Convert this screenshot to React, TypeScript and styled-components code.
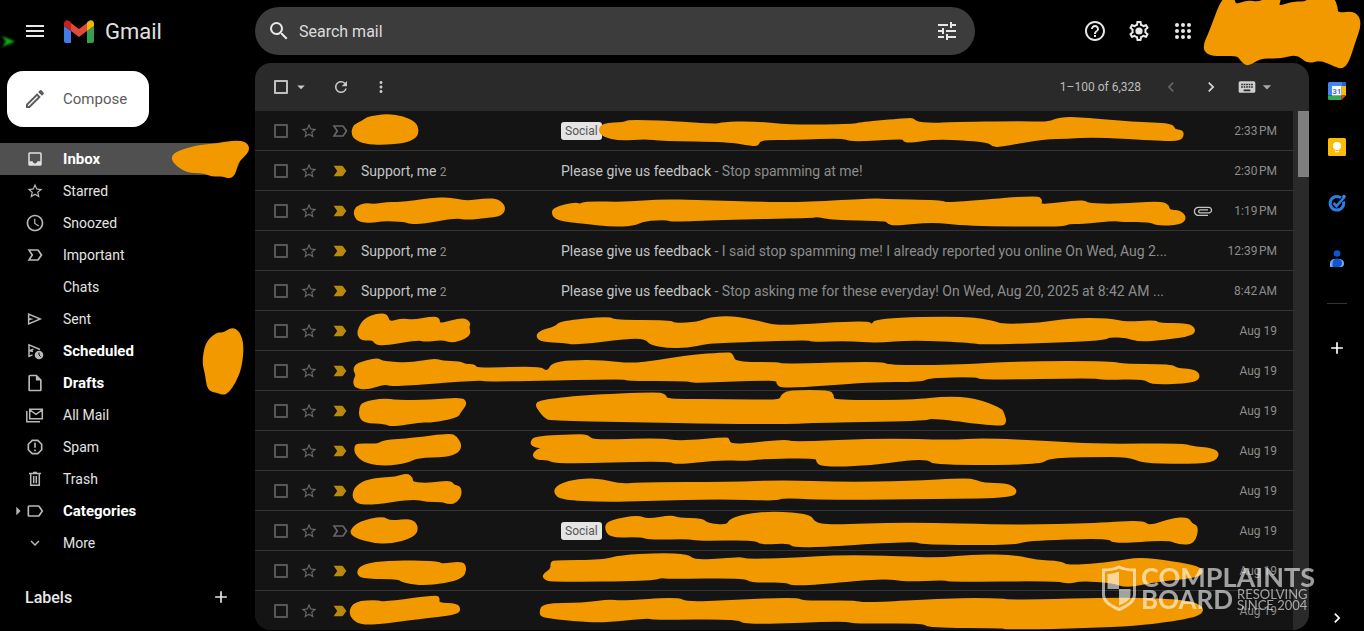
import React from "react";
import styled, { createGlobalStyle } from "styled-components";
import {
  MdMenu, MdSearch, MdTune, MdHelpOutline, MdRefresh, MdMoreVert, MdArrowDropDown,
  MdChevronLeft, MdChevronRight, MdKeyboard, MdStarBorder, MdLabelImportantOutline,
  MdLabelImportant, MdInbox, MdAccessTime,
  MdOutlineInsertDriveFile, MdReportGmailerrorred, MdLabelOutline,
  MdExpandMore, MdAdd, MdOutlineEdit, MdArrowRight, MdAttachFile,
} from "react-icons/md";

const GlobalStyle = createGlobalStyle`
  * { box-sizing: border-box; }
  body { margin: 0; background: #000; color: #e8e8e8; font-family: Roboto, "Liberation Sans", sans-serif; }
  button { font: inherit; color: inherit; background: none; border: 0; padding: 0; cursor: pointer; }
  a { color: inherit; text-decoration: none; }
`;

type Point = [number, number];

/* Smooth closed outline whose corners are rounded off between edge midpoints. */
const outline = (flat: string) => {
  const p = flat.trim().split(/\s+/).map((s) => s.split(",").map(Number) as Point);
  const mid = (a: Point, b: Point) => `${(a[0] + b[0]) / 2} ${(a[1] + b[1]) / 2}`;
  let d = `M${mid(p[p.length - 1], p[0])}`;
  p.forEach((c, i) => {
    d += `Q${c[0]} ${c[1]} ${mid(c, p[(i + 1) % p.length])}`;
  });
  return d + "Z";
};

const InkSvg = styled.svg`
  position: absolute;
  top: 0;
  left: 0;
  overflow: visible;
  pointer-events: none;
  z-index: 1;
`;

const Ink = ({ x, y, w, h, shapes }: { x: number; y: number; w: number; h: number; shapes: string[] }) => (
  <InkSvg width={w} height={h} viewBox={`${x} ${y} ${w} ${h}`} aria-hidden="true">
    {shapes.map((s) => (
      <path key={s.slice(0, 12)} d={outline(s)} fill="#f29900" stroke="#f29900" strokeWidth="2" strokeLinejoin="round" />
    ))}
  </InkSvg>
);

const Page = styled.div`
  position: relative;
  display: flex;
  flex-direction: column;
  height: 100vh;
  min-height: 400px;
  overflow: hidden;
`;

const Header = styled.header`
  position: relative;
  display: flex;
  align-items: center;
  flex: 0 0 63px;
  padding-bottom: 1px;
`;

const Brand = styled.div`
  display: flex;
  align-items: center;
  flex: 0 0 255px;
  padding-left: 23px;
  gap: 17px;
`;

const BrandLink = styled.a`
  display: flex;
  align-items: center;
  gap: 11px;
  font-size: 22px;
  color: #e0e0e0;
`;

const IconButton = styled.button<{ $size?: number; $color?: string }>`
  display: flex;
  align-items: center;
  justify-content: center;
  flex: none;
  width: ${(p) => p.$size ?? 24}px;
  height: ${(p) => p.$size ?? 24}px;
  color: ${(p) => p.$color ?? "#e8e8e8"};
`;

const Search = styled.form`
  display: flex;
  align-items: center;
  flex: 0 1 720px;
  height: 48px;
  padding: 0 16px 0 12px;
  gap: 6px;
  border-radius: 24px;
  background: #3c3c3c;
`;

const SearchInput = styled.input`
  flex: 1;
  min-width: 0;
  border: 0;
  outline: 0;
  background: none;
  font: 16px Roboto, "Liberation Sans", sans-serif;
  color: #e0e0e0;
  &::placeholder { color: #dcdcdc; opacity: 1; }
`;

const HeaderActions = styled.div`
  display: flex;
  gap: 20px;
  margin-left: auto;
  padding-right: 169px;
`;

const AccountInk = styled.div`
  position: absolute;
  top: 0;
  right: 0;
  width: 164px;
  height: 68px;
`;

const Cursor = styled.svg`
  position: absolute;
  top: 35px;
  left: 1px;
  filter: blur(1px);
`;

const Body = styled.div`
  display: flex;
  flex: 1;
  min-height: 0;
`;

const Sidebar = styled.nav`
  position: relative;
  flex: 0 0 255px;
  padding-top: 8px;
`;

const Compose = styled.button`
  display: flex;
  align-items: center;
  gap: 16px;
  height: 56px;
  margin: 0 0 16px 7px;
  padding: 0 22px 0 16px;
  border-radius: 16px;
  background: #fff;
  color: #5c5c5c;
  font-size: 15px;
`;

const NavItem = styled.a<{ $active?: boolean; $bold?: boolean }>`
  position: relative;
  display: flex;
  align-items: center;
  height: 32px;
  margin-right: 15px;
  padding-left: 25px;
  gap: 18px;
  border-radius: 0 16px 16px 0;
  font-size: ${(p) => (p.$active || p.$bold ? 15 : 14)}px;
  font-weight: ${(p) => (p.$active || p.$bold ? 700 : 400)};
  color: ${(p) => (p.$bold || p.$active ? "#fff" : "#e4e4e4")};
  background: ${(p) => (p.$active ? "#505050" : "none")};
`;

const NavIcon = styled.span<{ $active?: boolean }>`
  display: flex;
  justify-content: center;
  flex: 0 0 20px;
  color: ${(p) => (p.$active ? "#e0e0e0" : "#b8b8b8")};
`;

const NavCaret = styled.span`
  position: absolute;
  left: 8px;
  display: flex;
  color: #b8b8b8;
`;

const LabelsHead = styled.div`
  display: flex;
  align-items: center;
  justify-content: space-between;
  padding: 28px 24px 0 25px;
`;

const LabelsTitle = styled.h2`
  margin: 0;
  font-size: 16px;
  font-weight: 500;
`;

const Main = styled.main`
  display: flex;
  flex-direction: column;
  flex: 1;
  min-width: 0;
  margin-bottom: 1px;
  border-radius: 16px;
  background: #2a2a2a;
  overflow: hidden;
`;

const Toolbar = styled.div`
  display: flex;
  align-items: center;
  flex: 0 0 48px;
  padding: 0 32px 0 19px;
`;

const ToolGroup = styled.div<{ $gap?: number }>`
  display: flex;
  align-items: center;
  gap: ${(p) => p.$gap ?? 20}px;
`;

const PageCount = styled.span`
  margin-left: auto;
  margin-right: 20px;
  font-size: 12px;
  color: #bdbdbd;
`;

const CheckBox = styled.input<{ $bright?: boolean }>`
  appearance: none;
  flex: none;
  width: 14px;
  height: 14px;
  margin: 0;
  border: 2px solid ${(p) => (p.$bright ? "#c0c0c0" : "#575757")};
  border-radius: 1px;
`;

const ListArea = styled.div`
  display: flex;
  flex: 1;
  min-height: 0;
`;

const MailTable = styled.table`
  display: block;
  flex: 1;
  min-width: 0;
  background: #141414;
  overflow: hidden;
`;

const MailBody = styled.tbody`
  display: block;
`;

const MailRow = styled.tr`
  position: relative;
  display: flex;
  align-items: center;
  height: 40px;
  padding: 0 16px 0 19px;
  border-bottom: 1px solid #343434;
`;

const Marks = styled.td`
  display: flex;
  align-items: center;
  flex: 0 0 87px;
  gap: 11px;
  padding: 0;
`;

const Sender = styled.td`
  flex: 0 0 200px;
  padding: 0;
  font-size: 14px;
  color: #c4c4c4;
  white-space: nowrap;
`;

const Count = styled.span`
  font-size: 12px;
  color: #8c8c8c;
`;

const Subject = styled.td`
  flex: 1;
  min-width: 0;
  padding: 0;
  font-size: 14px;
  color: #c4c4c4;
  white-space: nowrap;
  overflow: hidden;
  text-overflow: ellipsis;
`;

const Snippet = styled.span`
  color: #8c8c8c;
`;

const Tag = styled.span`
  display: inline-block;
  padding: 0 4px;
  border-radius: 3px;
  background: #e4e4e4;
  color: #555;
  font-size: 12px;
  line-height: 18px;
`;

const Attachment = styled.td`
  display: flex;
  justify-content: center;
  flex: 0 0 46px;
  padding: 0;
  color: #c4c4c4;
`;

const Clip = styled(MdAttachFile)`
  transform: rotate(90deg);
`;

const When = styled.td`
  flex: 0 0 51px;
  padding: 0;
  font-size: 12px;
  text-align: right;
  white-space: nowrap;
  color: #8c8c8c;
`;

const ScrollTrack = styled.div`
  flex: 0 0 16px;
  padding-left: 5px;
`;

const ScrollThumb = styled.div`
  height: 66px;
  background: #7f7f7f;
`;

const SidePanel = styled.aside`
  display: flex;
  flex-direction: column;
  align-items: center;
  flex: 0 0 55px;
  min-width: 0;
`;

const PanelRule = styled.hr`
  width: 20px;
  margin: 16px 0;
  border: 0;
  border-top: 1px solid #333;
`;

const PanelToggle = styled.div`
  margin-top: auto;
`;

const Watermark = styled.div`
  position: absolute;
  right: 49px;
  bottom: 20px;
  z-index: 2;
  display: flex;
  align-items: center;
  gap: 4px;
  color: #fff;
  opacity: 0.6;
  font-family: Lato, sans-serif;
`;

const MarkText = styled.div`
  display: flex;
  flex-direction: column;
`;

const MarkTitle = styled.span<{ $size: number }>`
  font-size: ${(p) => p.$size}px;
  font-weight: 700;
  line-height: 23px;
`;

const MarkLine = styled.div`
  display: flex;
  align-items: center;
  gap: 4px;
`;

const MarkSmall = styled.span`
  font-size: 13px;
  line-height: 11px;
`;

const GmailLogo = () => (
  <svg width="30" height="23" viewBox="0 0 30 23" aria-hidden="true">
    <path d="M0 6v15a2 2 0 0 0 2 2h5V11z" fill="#3f7de8" />
    <path d="M30 6v15a2 2 0 0 1-2 2h-5V11z" fill="#34a04f" />
    <path d="M7 11V3l8 6 8-6v8l-8 6z" fill="#e04a3c" />
    <path d="M0 3.500C0 .6 3-.7 5.300 1L7 2.500V11L0 6z" fill="#c5221f" />
    <path d="M30 3.500C30 .6 27-.7 24.700 1L23 2.500V11l7-5z" fill="#f2b705" />
  </svg>
);

const GearIcon = () => (
  <svg width="24" height="24" viewBox="0 0 24 24" fill="currentColor" aria-hidden="true">
    <path
      fillRule="evenodd"
      d="M19.430 12.980c.04-.32.07-.64.07-.98 0-.34-.03-.66-.07-.98l2.110-1.650c.19-.15.24-.42.12-.64l-2-3.460c-.09-.16-.26-.25-.44-.25-.06 0-.12.01-.17.03l-2.490 1c-.52-.4-1.080-.73-1.690-.98l-.38-2.650C14.460 2.180 14.250 2 14 2h-4c-.25 0-.46.18-.49.42l-.38 2.650c-.61.25-1.170.59-1.690.98l-2.490-1c-.06-.02-.12-.03-.18-.03-.17 0-.34.09-.43.25l-2 3.460c-.13.22-.07.49.12.64l2.110 1.650c-.04.32-.07.65-.07.98 0 .33.03.66.07.98l-2.110 1.650c-.19.15-.24.42-.12.64l2 3.460c.09.16.26.25.44.25.06 0 .12-.01.17-.03l2.490-1c.52.4 1.080.73 1.690.98l.38 2.650c.03.24.24.42.49.42h4c.25 0 .46-.18.49-.42l.38-2.650c.61-.25 1.170-.59 1.690-.98l2.490 1c.06.02.12.03.18.03.17 0 .34-.09.43-.25l2-3.460c.12-.22.07-.49-.12-.64l-2.110-1.650zm-1.980-1.710c.04.31.05.52.05.73 0 .21-.02.43-.05.73l-.14 1.130.89.7 1.080.84-.7 1.210-1.270-.51-1.040-.42-.9.68c-.43.32-.84.56-1.250.73l-1.060.43-.16 1.130-.2 1.350h-1.400l-.19-1.350-.16-1.130-1.060-.43c-.43-.18-.83-.41-1.230-.71l-.91-.7-1.060.43-1.270.51-.7-1.210 1.080-.84.89-.7-.14-1.130c-.03-.31-.05-.54-.05-.74s.02-.43.05-.73l.14-1.130-.89-.7-1.080-.84.7-1.210 1.270.51 1.040.42.9-.68c.43-.32.84-.56 1.250-.73l1.060-.43.16-1.130.2-1.350h1.390l.19 1.350.16 1.130 1.060.43c.43.18.83.41 1.230.71l.91.7 1.060-.43 1.270-.51.7 1.210-1.070.85-.89.7.14 1.130z"
    />
    <circle cx="12" cy="12" r="3.600" />
  </svg>
);

const AppsIcon = () => (
  <svg width="24" height="24" viewBox="0 0 24 24" fill="currentColor" aria-hidden="true">
    {[6, 12, 18].map((cy) => [6, 12, 18].map((cx) => <circle key={`${cx}-${cy}`} cx={cx} cy={cy} r="2" />))}
  </svg>
);

const SentIcon = () => (
  <svg width="18" height="18" viewBox="0 0 24 24" fill="currentColor" aria-hidden="true">
    <path fillRule="evenodd" d="M2.500 20V4l19 8zM4.500 17l11.850-5L4.500 7v3.500l6 1.500-6 1.500z" />
  </svg>
);

const ScheduledIcon = () => (
  <svg width="20" height="20" viewBox="0 0 20 20" fill="none" stroke="currentColor" strokeWidth="1.500" aria-hidden="true">
    <path d="M15 8.500L4 3.800v11.600l3.500-1.500M4 9.600l4.500-1.400M4 9.600l4 .8" />
    <circle cx="14" cy="14" r="4.300" fill="currentColor" stroke="none" />
    <path d="M14 11.500V14l1.600 1.600" stroke="#000" strokeWidth="1" />
  </svg>
);

const TrashIcon = () => (
  <svg width="20" height="20" viewBox="0 0 20 20" fill="none" stroke="currentColor" strokeWidth="1.500" aria-hidden="true">
    <path d="M4 4.500h12M8 3.500h4M5.700 5v11.300h8.600V5M8.700 7v7.300M11.300 7v7.300" />
  </svg>
);

const AllMailIcon = () => (
  <svg width="20" height="20" viewBox="0 0 20 20" fill="none" stroke="currentColor" strokeWidth="1.500" aria-hidden="true">
    <path d="M4.700 4.200h12.600v9.600H4.700zM5 5l6 4.300L17 5M1.800 6v10.800H15" />
  </svg>
);

const CalendarIcon = () => (
  <svg width="20" height="20" viewBox="0 0 20 20" aria-hidden="true">
    <path d="M2.500 1h13v4.500H5.500v9H1v-12A1.500 1.500 0 0 1 2.500 1z" fill="#4285f4" />
    <path d="M14.500 1h3A1.500 1.500 0 0 1 19 2.500v12h-4.500z" fill="#fbbc04" />
    <path d="M14.500 1h3A1.500 1.500 0 0 1 19 2.500V5h-4.500z" fill="#1967d2" />
    <path d="M1 14.500h13.500V19h-12A1.500 1.500 0 0 1 1 17.500z" fill="#34a853" />
    <path d="M14.500 14.500H19L14.500 19z" fill="#ea4335" />
    <path d="M5 5h9.500v9.500H5z" fill="#fff" />
    <text x="9.800" y="12.800" fontSize="8" fontWeight="700" textAnchor="middle" fill="#4272d8">31</text>
  </svg>
);

const KeepIcon = () => (
  <svg width="20" height="20" viewBox="0 0 20 20" aria-hidden="true">
    <rect x="1" y="1" width="18" height="18" rx="1.500" fill="#fbbc04" />
    <circle cx="10" cy="9" r="4" fill="#fff" />
    <path d="M8 11h4v2H8zM8 14h4v1.300H8z" fill="#fff" />
  </svg>
);

const TasksIcon = () => (
  <svg width="20" height="20" viewBox="0 0 20 20" fill="none" aria-hidden="true">
    <path d="M14 4.800A6.800 6.800 0 1 0 16.500 8.500" stroke="#2a7de1" strokeWidth="3" />
    <path d="M6.500 10l3 3 8-9" stroke="#2a7de1" strokeWidth="2.600" />
    <circle cx="17" cy="3.500" r="1.700" fill="#3b8cf0" />
  </svg>
);

const ContactsIcon = () => (
  <svg width="20" height="20" viewBox="0 0 20 20" aria-hidden="true">
    <circle cx="10" cy="4.500" r="3.300" fill="#0b57d0" />
    <path d="M3 18v-3.500C3 11.500 5 10 8 10h4c3 0 5 1.500 5 4.500 0 2-1 3.500-3 3.500z" fill="#7ba7f5" />
    <path d="M5.500 18v-4c0-2.600 2-4.500 4.500-4.500s5 1.900 5 4.500-1.500 4-4 4z" fill="#0b57d0" />
  </svg>
);

const ShieldIcon = () => (
  <svg width="36" height="46" viewBox="0 0 36 46" aria-hidden="true">
    <path d="M18 2C13 4.500 8 5 2.500 5v25c0 7 7 11 15.500 14.500C26.500 41 33.500 37 33.500 30V5C28 5 23 4.500 18 2z" fill="none" stroke="#fff" strokeWidth="3" />
    <path d="M6.500 9C11 9 14 8 18 6.500V24H6.500z" fill="#fff" />
    <path d="M18 24h11.500v6c0 5-5 8-11.500 10.500z" fill="#fff" />
  </svg>
);

type Mail = {
  sender?: string;
  tag?: string;
  snippet?: string;
  when: string;
  important?: boolean;
  attachment?: boolean;
  ink: string[];
};

const NN = "\u202f";

const mails: Mail[] = [
  {
    tag: "Social", when: `2:33${NN}PM`,
    ink: [
      "352,131 355,125 362,122 367,118 377,116 388,115 403,117 415,123 418,130 416,137 405,142 383,144 365,143 354,138",
      "599,130 603,124 625,123 627,121 647,121 670,122 718,125 722,123 753,122 793,126 855,125 860,123 907,119 913,119 917,123 940,124 943,123 1027,122 1048,123 1060,118 1080,118 1133,123 1172,124 1174,130 1182,131 1183,135 1180,140 1163,140 1093,136 1067,138 1045,138 1000,146 993,146 988,141 937,138 910,142 904,141 903,138 850,141 843,137 795,139 760,139 758,145 752,145 728,141 662,140 645,138 620,140 603,136",
    ],
  },
  { sender: "Support, me", snippet: "Stop spamming at me!", when: `2:30${NN}PM`, important: true, ink: [] },
  {
    when: `1:19${NN}PM`, important: true, attachment: true,
    ink: [
      "354,213 357,207 365,204 375,205 387,203 397,203 410,202 430,199 450,198 465,202 487,199 498,200 505,207 502,215 487,217 467,219 455,217 423,223 410,223 405,221 383,220 372,222 358,221",
      "552,213 555,208 575,203 580,205 585,202 627,203 660,200 697,201 769,203 806,203 876,199 880,200 942,201 947,204 1036,196 1042,200 1039,206 1077,201 1086,202 1088,204 1116,205 1159,202 1168,205 1169,211 1180,211 1186,218 1180,224 1157,225 1150,221 1122,221 1114,220 1081,223 1069,223 1061,226 966,225 932,221 895,225 888,223 886,220 833,219 817,216 812,217 720,219 672,221 667,219 645,220 633,225 612,226 587,223 557,220",
    ],
  },
  { sender: "Support, me", snippet: "I said stop spamming me! I already reported you online On Wed, Aug 2...", when: `12:39${NN}PM`, important: true, ink: [] },
  { sender: "Support, me", snippet: "Stop asking me for these everyday! On Wed, Aug 20, 2025 at 8:42 AM ...", when: `8:42${NN}AM`, important: true, ink: [] },
  {
    when: "Aug 19", important: true,
    ink: [
      "358,335 359,328 365,319 378,314 387,315 389,323 402,319 413,321 433,317 439,319 439,325 463,318 470,323 468,327 470,333 465,338 452,342 443,339 425,341 418,339 383,345 375,343 373,339 362,340",
      "537,337 539,332 556,327 560,322 610,317 614,321 670,321 675,324 698,323 710,318 730,317 745,319 763,323 780,327 868,321 872,326 876,319 966,317 995,322 1001,325 1040,324 1069,319 1110,319 1125,323 1155,321 1159,324 1188,324 1195,329 1192,335 1164,339 1139,341 1127,337 1109,336 1104,340 983,344 973,342 913,339 876,342 849,340 812,341 808,339 720,342 707,343 687,347 667,347 650,344 647,339 633,337 577,344 563,342 542,341",
    ],
  },
  {
    when: "Aug 19", important: true,
    ink: [
      "354,370 356,365 367,361 378,359 383,362 410,364 435,359 442,362 460,362 465,365 474,365 477,369 540,367 544,371 549,371 552,364 570,361 603,361 635,365 687,356 727,353 732,354 735,363 777,363 784,365 882,362 888,366 950,366 1024,362 1114,362 1120,365 1172,365 1176,369 1194,370 1200,376 1194,382 1151,384 1145,378 1102,379 1094,377 983,379 975,376 929,377 921,381 872,381 782,388 777,383 777,379 720,381 693,382 687,380 628,380 623,378 487,381 480,379 393,386 385,383 367,389 355,387 354,380 357,375",
    ],
  },
  {
    when: "Aug 19", important: true,
    ink: [
      "360,408 363,403 383,399 397,401 430,401 462,398 466,403 463,408 460,412 457,417 430,422 422,421 392,426 385,423 365,422 360,417",
      "536,405 540,401 583,396 657,393 665,395 667,400 730,400 780,401 782,395 790,391 829,391 833,395 833,401 913,401 946,397 975,399 1001,409 1003,413 1006,422 1001,426 931,417 925,420 806,422 798,423 720,423 633,421 550,420 545,417 540,411",
    ],
  },
  {
    when: "Aug 19", important: true,
    ink: [
      "355,447 358,444 378,445 383,441 413,439 450,434 456,437 461,445 458,452 447,456 417,457 407,462 387,465 367,463 356,455",
      "531,442 535,437 580,435 588,436 593,441 660,439 680,442 727,438 728,439 731,446 786,440 792,443 884,439 950,441 983,439 1049,442 1098,445 1184,444 1190,447 1213,449 1219,454 1213,462 1180,463 1143,462 1129,456 1094,456 1049,457 1040,464 934,464 929,459 909,459 868,465 823,466 817,462 817,457 761,458 749,460 717,459 677,464 668,460 557,463 548,459 537,459 533,455 537,450 545,448 533,446",
    ],
  },
  {
    when: "Aug 19", important: true,
    ink: [
      "353,497 355,488 365,481 383,478 395,478 407,474 412,478 412,483 430,484 450,481 454,486 460,487 461,495 455,503 447,503 443,501 427,501 413,498 373,504 358,503",
      "554,493 558,485 580,479 603,480 620,485 643,483 730,483 782,481 843,483 909,482 966,479 977,481 983,484 1007,484 1017,490 1012,497 946,498 827,499 782,497 777,500 720,498 650,500 603,501 562,499",
    ],
  },
  {
    tag: "Social", when: "Aug 19",
    ink: [
      "350,531 360,522 383,517 390,522 412,519 418,528 413,537 390,543 373,542 355,537",
      "605,527 610,521 638,516 647,520 672,516 678,519 702,519 707,524 727,526 730,520 745,515 773,512 810,515 814,523 829,526 905,523 1016,526 1098,524 1143,521 1149,527 1172,519 1188,518 1191,524 1198,527 1194,543 1180,544 1168,539 1114,543 1108,537 1024,540 1018,544 921,544 915,540 794,548 790,542 761,544 755,539 697,540 690,538 650,539 640,536 610,537",
    ],
  },
  {
    when: "Aug 19", important: true,
    ink: [
      "357,573 362,565 390,561 438,562 442,565 462,562 466,568 462,579 427,585 403,582 398,578 363,578",
      "543,575 552,569 551,563 555,561 603,561 620,556 660,554 688,555 694,561 730,559 741,558 747,560 788,559 839,556 901,557 938,559 975,555 1016,556 1036,561 1061,562 1067,566 1090,565 1118,562 1139,558 1172,562 1198,567 1203,572 1196,577 1155,581 1127,587 1112,582 1081,580 1069,583 1055,580 950,581 944,579 905,581 884,577 794,586 786,581 751,582 745,577 667,578 662,577 650,580 553,581 545,579",
    ],
  },
  {
    when: "Aug 19", important: true,
    ink: [
      "349,613 355,602 378,601 383,603 435,596 439,598 438,604 457,604 460,610 455,614 420,618 373,624 357,623",
      "540,613 543,604 583,604 610,600 620,602 677,598 687,603 730,601 798,598 802,602 855,601 864,604 950,599 999,599 1012,601 1131,598 1188,601 1202,607 1202,613 1188,618 1131,626 1007,629 1003,627 929,627 923,622 855,623 845,620 745,624 738,618 653,619 648,617 603,622 573,620 543,617",
    ],
  },
];

const sidebarInk = [
  "172,159 175,153 197,146 213,145 223,143 240,141 248,145 248,152 237,162 235,173 230,178 222,175 213,176 203,172 187,172 177,165",
  "203,363 206,343 217,333 223,334 232,328 239,332 243,345 241,367 235,382 228,392 223,394 218,392 208,390 206,373",
];

const accountInk = [
  "1223,-3 1233,-3 1235,6 1247,1 1259,3 1270,-3 1281,-3 1277,8 1293,2 1305,3 1312,-3 1333,-3 1337,8 1337,14 1355,12 1361,23 1354,43 1348,62 1342,68 1336,66 1320,59 1308,63 1297,53 1280,58 1260,57 1248,66 1241,60 1238,55 1224,55 1210,55 1203,48 1210,32",
];

const navItems = [
  { label: "Inbox", icon: <MdInbox size={18} />, active: true },
  { label: "Starred", icon: <MdStarBorder size={18} /> },
  { label: "Snoozed", icon: <MdAccessTime size={20} /> },
  { label: "Important", icon: <MdLabelImportantOutline size={20} /> },
  { label: "Chats" },
  { label: "Sent", icon: <SentIcon /> },
  { label: "Scheduled", icon: <ScheduledIcon />, bold: true },
  { label: "Drafts", icon: <MdOutlineInsertDriveFile size={20} />, bold: true },
  { label: "All Mail", icon: <AllMailIcon /> },
  { label: "Spam", icon: <MdReportGmailerrorred size={20} /> },
  { label: "Trash", icon: <TrashIcon /> },
  { label: "Categories", icon: <MdLabelOutline size={20} />, bold: true, caret: true },
  { label: "More", icon: <MdExpandMore size={18} /> },
];

export default function App() {
  return (
    <Page>
      <GlobalStyle />
      <Header>
        <Cursor width="15" height="13" viewBox="0 0 15 13" aria-hidden="true">
          <path d="M1 1l13 5.500L1 12l4-5.500z" fill="#0fb40f" />
        </Cursor>
        <Brand>
          <IconButton aria-label="Main menu"><MdMenu size={24} /></IconButton>
          <BrandLink href="#inbox"><GmailLogo />Gmail</BrandLink>
        </Brand>
        <Search role="search">
          <IconButton type="button" aria-label="Search"><MdSearch size={24} /></IconButton>
          <SearchInput aria-label="Search mail" placeholder="Search mail" />
          <IconButton type="button" aria-label="Search options"><MdTune size={24} /></IconButton>
        </Search>
        <HeaderActions>
          <IconButton aria-label="Support"><MdHelpOutline size={24} /></IconButton>
          <IconButton aria-label="Settings"><GearIcon /></IconButton>
          <IconButton aria-label="Google apps"><AppsIcon /></IconButton>
        </HeaderActions>
        <AccountInk><Ink x={1200} y={0} w={164} h={68} shapes={accountInk} /></AccountInk>
      </Header>
      <Body>
        <Sidebar>
          <Compose><MdOutlineEdit size={24} />Compose</Compose>
          {navItems.map((n) => (
            <NavItem key={n.label} href={`#${n.label}`} $active={n.active} $bold={n.bold}>
              {n.caret && <NavCaret><MdArrowRight size={20} /></NavCaret>}
              <NavIcon $active={n.active}>{n.icon}</NavIcon>
              {n.label}
            </NavItem>
          ))}
          <LabelsHead>
            <LabelsTitle>Labels</LabelsTitle>
            <IconButton $size={20} aria-label="Create new label"><MdAdd size={20} /></IconButton>
          </LabelsHead>
          <Ink x={0} y={63} w={255} h={400} shapes={sidebarInk} />
        </Sidebar>
        <Main>
          <Toolbar>
            <ToolGroup>
              <ToolGroup $gap={3}>
                <CheckBox type="checkbox" $bright aria-label="Select all" />
                <IconButton $size={20} $color="#c8c8c8" aria-label="Select options"><MdArrowDropDown size={18} /></IconButton>
              </ToolGroup>
              <IconButton $size={20} $color="#c8c8c8" aria-label="Refresh"><MdRefresh size={18} /></IconButton>
              <IconButton $size={20} $color="#c8c8c8" aria-label="More"><MdMoreVert size={18} /></IconButton>
            </ToolGroup>
            <PageCount>1–100 of 6,328</PageCount>
            <ToolGroup $gap={16}>
              <ToolGroup>
                <IconButton $size={20} $color="#666" aria-label="Newer"><MdChevronLeft size={20} /></IconButton>
                <IconButton $size={20} $color="#d8d8d8" aria-label="Older"><MdChevronRight size={20} /></IconButton>
              </ToolGroup>
              <ToolGroup $gap={0}>
                <IconButton $size={20} $color="#d0d0d0" aria-label="Input tools"><MdKeyboard size={20} /></IconButton>
                <IconButton $size={20} $color="#a8a8a8" aria-label="Select input tool"><MdArrowDropDown size={20} /></IconButton>
              </ToolGroup>
            </ToolGroup>
          </Toolbar>
          <ListArea>
            <MailTable>
              <MailBody>
                {mails.map((m, i) => (
                  <MailRow key={i}>
                    <Marks>
                      <CheckBox type="checkbox" aria-label="Select conversation" />
                      <IconButton $size={20} $color="#666" aria-label="Star"><MdStarBorder size={18} /></IconButton>
                      <IconButton $size={20} $color={m.important ? "#b8890c" : "#666"} aria-label="Important">
                        {m.important ? <MdLabelImportant size={18} /> : <MdLabelImportantOutline size={20} />}
                      </IconButton>
                    </Marks>
                    <Sender>{m.sender && <>{m.sender} <Count>2</Count></>}</Sender>
                    <Subject>
                      {m.tag && <Tag>{m.tag}</Tag>}
                      {m.snippet && <>Please give us feedback<Snippet> - {m.snippet}</Snippet></>}
                    </Subject>
                    <Attachment>{m.attachment && <Clip size={20} />}</Attachment>
                    <When>
                      {m.when}
                      <Ink x={255} y={111 + i * 40} w={1038} h={40} shapes={m.ink} />
                    </When>
                  </MailRow>
                ))}
              </MailBody>
            </MailTable>
            <ScrollTrack><ScrollThumb /></ScrollTrack>
          </ListArea>
        </Main>
        <SidePanel>
          <IconButton $size={56} aria-label="Calendar"><CalendarIcon /></IconButton>
          <IconButton $size={56} aria-label="Keep"><KeepIcon /></IconButton>
          <IconButton $size={56} aria-label="Tasks"><TasksIcon /></IconButton>
          <IconButton $size={56} aria-label="Contacts"><ContactsIcon /></IconButton>
          <PanelRule />
          <IconButton $size={56} $color="#fff" aria-label="Get add-ons"><MdAdd size={20} /></IconButton>
          <PanelToggle>
            <IconButton $size={26} $color="#fff" aria-label="Hide side panel"><MdChevronRight size={20} /></IconButton>
          </PanelToggle>
        </SidePanel>
      </Body>
      <Watermark>
        <ShieldIcon />
        <MarkText>
          <MarkTitle $size={27}>COMPLAINTS</MarkTitle>
          <MarkLine>
            <MarkTitle $size={26}>BOARD</MarkTitle>
            <MarkText>
              <MarkSmall>RESOLVING</MarkSmall>
              <MarkSmall>SINCE 2004</MarkSmall>
            </MarkText>
          </MarkLine>
        </MarkText>
      </Watermark>
    </Page>
  );
}
